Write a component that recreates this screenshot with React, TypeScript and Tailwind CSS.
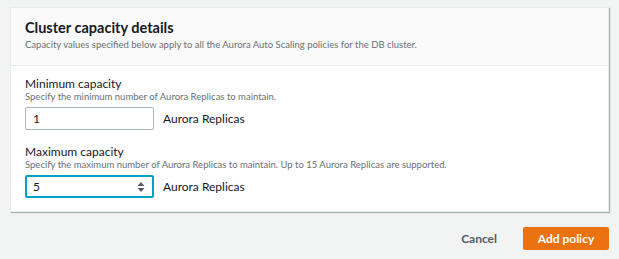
import React from 'react'

const font = { fontFamily: 'Lato, "Open Sans", "Liberation Sans", sans-serif' }

const Spinner = () => (
  <svg width="8" height="12" viewBox="0 0 8 12" className="text-[#545b64]">
    <path d="M4 1 L7.5 5 H0.5 Z" fill="currentColor" />
    <path d="M4 11 L7.5 7 H0.5 Z" fill="currentColor" />
  </svg>
)

const Field = ({
  label,
  hint,
  value,
  focused,
}: {
  label: string
  hint: string
  value: string
  focused?: boolean
}) => (
  <div className="flex flex-col">
    <span className="text-[12px] leading-[12px] text-[#16191f]">{label}</span>
    <span className="text-[9.5px] leading-[12px] text-[#687078] mt-px">{hint}</span>
    <div className="flex items-center gap-[9px] mt-[4px]">
      <div
        className={
          focused
            ? 'w-[129px] h-[23px] rounded-[2px] border-2 border-[#00a1c9] bg-white flex items-center justify-between pl-[6px] pr-[7px]'
            : 'w-[129px] h-[23px] rounded-[2px] border border-[#aab7b8] bg-white flex items-center pl-[7px]'
        }
      >
        <span className="text-[12px] text-[#16191f]">{value}</span>
        {focused && <Spinner />}
      </div>
      <span className="text-[12px] text-[#16191f]">Aurora Replicas</span>
    </div>
  </div>
)

export default function App() {
  return (
    <div style={font} className="w-[619px] h-[259px] bg-[#f2f3f3] pt-[7px] px-[10px] flex flex-col">
      <div className="bg-white border border-[#eaeded] shadow-[1px_1px_1px_rgba(0,28,36,0.3)]">
        <div className="bg-[#fafafa] border-b border-[#eaeded] px-[14px] pt-[11px] pb-[14px]">
          <h2 className="text-[14.5px] leading-[18px] font-bold text-[#16191f]">Cluster capacity details</h2>
          <p className="text-[9.5px] leading-[12px] text-[#687078] mt-[2px]">
            Capacity values specified below apply to all the Aurora Auto Scaling policies for the DB cluster.
          </p>
        </div>
        <div className="px-[14px] pt-[12px] pb-[13px] flex flex-col gap-[16px]">
          <Field
            label="Minimum capacity"
            hint="Specify the minimum number of Aurora Replicas to maintain."
            value="1"
          />
          <Field
            label="Maximum capacity"
            hint="Specify the maximum number of Aurora Replicas to maintain. Up to 15 Aurora Replicas are supported."
            value="5"
            focused
          />
        </div>
      </div>
      <div className="flex justify-end items-center mt-[15px] gap-[26px]">
        <button className="text-[12px] font-bold text-[#545b64]">Cancel</button>
        <button className="w-[86px] h-[23px] rounded-[2px] bg-[#ec7211] text-white text-[12px] font-bold">
          Add policy
        </button>
      </div>
    </div>
  )
}
